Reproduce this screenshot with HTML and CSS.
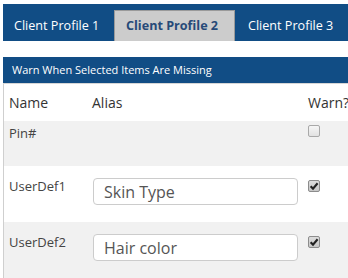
FILE: index.html
```html
<!DOCTYPE html>
<html lang="en">
<head>
  <meta charset="UTF-8">
  <title>Client Profiles</title>
  <link rel="stylesheet" href="styles.css">
</head>
<body>

<div class="page">
  <div class="tabs">
    <div class="tab first">Client Profile 1</div>
    <div class="tab active">Client Profile 2</div>
    <div class="tab last">Client Profile 3</div>
  </div>

  <div class="panel">
    <div class="panel-head">Warn When Selected Items Are Missing</div>
    <table class="warn-table">
      <tr class="head-row">
        <th class="col-name">Name</th>
        <th class="col-alias">Alias</th>
        <th class="col-warn">Warn?</th>
      </tr>
      <tr class="row odd short">
        <td>Pin#</td>
        <td></td>
        <td><span class="check"></span></td>
      </tr>
      <tr class="row">
        <td>UserDef1</td>
        <td><input class="alias-input" type="text" value="Skin Type"></td>
        <td><span class="check on"><svg width="10" height="10" viewBox="0 0 10 10"><path d="M1.6 5.2 L4 7.6 L8.6 2.2" fill="none" stroke="#222" stroke-width="2.1"/></svg></span></td>
      </tr>
      <tr class="row odd">
        <td>UserDef2</td>
        <td><input class="alias-input" type="text" value="Hair color"></td>
        <td><span class="check on"><svg width="10" height="10" viewBox="0 0 10 10"><path d="M1.6 5.2 L4 7.6 L8.6 2.2" fill="none" stroke="#222" stroke-width="2.1"/></svg></span></td>
      </tr>
    </table>
  </div>
</div>

</body>
</html>
```

FILE: styles.css
```css
html, body {
  margin: 0;
  overflow: hidden;
}

body {
  padding: 4px 0 0 3px;
  font-family: 'Open Sans', sans-serif;
  background: #fff;
  color: #333;
}

.page {
  width: 420px;
}

.tabs {
  display: flex;
  align-items: flex-end;
  height: 37px;
  background: #114d85;
}

.tab {
  flex: 0 0 auto;
  box-sizing: border-box;
  height: 31px;
  line-height: 29px;
  font-size: 12.6px;
  color: #fff;
  padding: 0 13px;
  border: 1px solid transparent;
  border-bottom: none;
  white-space: nowrap;
}

.tab.first {
  width: 111px;
  padding: 0 0 0 10px;
}

.tab.active {
  width: 121px;
  background: #cccccc;
  border-color: #9a9a9a;
  color: #274a78;
  font-weight: bold;
  padding: 0 0 0 11px;
}

.tab.last {
  padding-left: 12px;
}

.panel {
  margin-top: 16px;
}

.panel-head {
  height: 26px;
  line-height: 26px;
  background: #114d85;
  color: #fff;
  font-size: 11px;
  padding-left: 9px;
}

.warn-table {
  width: 100%;
  border-collapse: collapse;
  border-left: 1px solid #cfcfcf;
  border-top: 1px solid #d6d6d6;
}

.warn-table th {
  height: 37px;
  font-size: 14px;
  font-weight: normal;
  text-align: left;
  padding: 0 5px;
  color: #333;
}

.col-name {
  width: 73px;
}

.col-alias {
  width: 206px;
}

.row td {
  height: 56px;
  vertical-align: top;
  font-size: 13px;
  line-height: 18px;
  color: #444;
  padding: 11px 5px 0;
  box-sizing: border-box;
}

.row.short td {
  height: 45px;
  padding-top: 3px;
}

.row.odd td {
  background: #f1f1f1;
}

.alias-input {
  display: block;
  box-sizing: border-box;
  width: 205px;
  height: 27px;
  margin: 1px 0 0 1px;
  padding: 0 10px;
  border: 1px solid #cccccc;
  border-radius: 4px;
  background: #fff;
  font-family: 'Open Sans', sans-serif;
  font-size: 16px;
  color: #555;
}

.check {
  display: block;
  box-sizing: border-box;
  width: 12px;
  height: 12px;
  margin-top: 3px;
  border: 1px solid #a9a9a9;
  border-radius: 2px;
  background: linear-gradient(#f6f6f6, #e2e2e2);
}

.row.short .check {
  margin-top: 1px;
}

.check.on {
  background: linear-gradient(#dcdcdc, #c8c8c8);
  border-color: #8c8c8c;
}

.check svg {
  display: block;
}
```
